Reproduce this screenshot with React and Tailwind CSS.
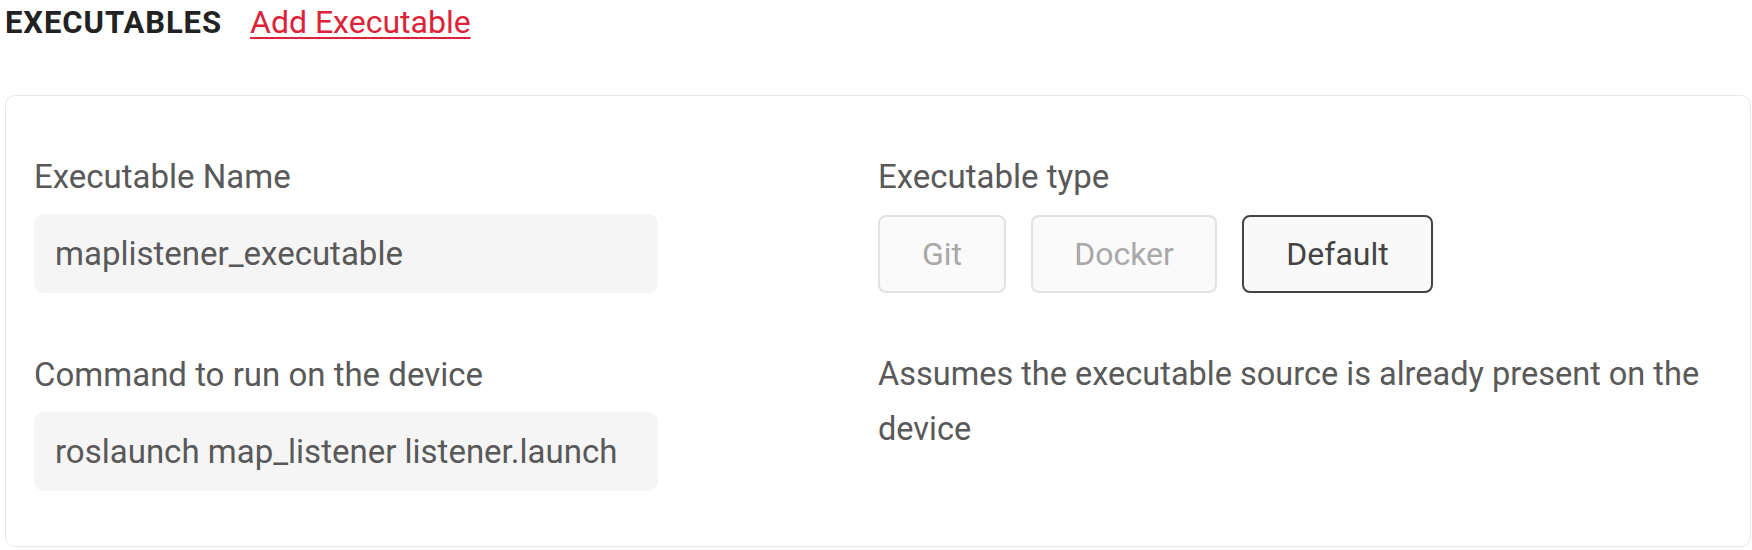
const FONT = "font-['Roboto','Liberation_Sans',sans-serif]";

function Field({ label, value }) {
  return (
    <div className="flex flex-col">
      <label className="text-[33px] leading-[36px] text-[#595959]">{label}</label>
      <div className="mt-[19px] h-[79px] w-[624px] rounded-[10px] bg-[#f5f5f5] pl-[21px] flex items-center text-[33px] text-[#595959]">
        {value}
      </div>
    </div>
  );
}

function TypeButton({ children, active, width }) {
  return (
    <button
      className={`h-[78px] ${width} rounded-[8px] border-2 text-[32px] ${
        active
          ? "border-[#444444] bg-[#f9f9f9] text-[#444444]"
          : "border-[#e2e2e2] bg-[#fafafa] text-[#a8a8a8]"
      }`}
    >
      {children}
    </button>
  );
}

export default function App() {
  return (
    <div className={`${FONT} bg-white h-[550px] pl-[5px] pr-[1px]`}>
      {/* Section header */}
      <div className="flex items-baseline gap-[28px] h-[44px] leading-[44px]">
        <h2 className="text-[31px] font-bold tracking-[0.03em] text-[#222222]">
          EXECUTABLES
        </h2>
        <a
          href="#"
          className="text-[32px] text-[#dc2339] underline underline-offset-[4px] decoration-2"
        >
          Add Executable
        </a>
      </div>

      {/* Executable card */}
      <div className="mt-[51px] rounded-[10px] border border-[#e9e9e9] px-[28px] pt-[63px] pb-[55px]">
        <div className="grid grid-cols-2 gap-y-[64px]">
          <Field label="Executable Name" value="maplistener_executable" />

          <div className="flex flex-col">
            <label className="text-[33px] leading-[36px] text-[#595959]">
              Executable type
            </label>
            <div className="mt-[20px] flex gap-[25px]">
              <TypeButton width="w-[128px]">Git</TypeButton>
              <TypeButton width="w-[186px]">Docker</TypeButton>
              <TypeButton width="w-[191px]" active>
                Default
              </TypeButton>
            </div>
          </div>

          <Field
            label="Command to run on the device"
            value="roslaunch map_listener listener.launch"
          />

          <p className="-mt-[10px] w-[844px] text-[32.5px] leading-[55px] text-[#595959]">
            Assumes the executable source is already present on the device
          </p>
        </div>
      </div>
    </div>
  );
}
